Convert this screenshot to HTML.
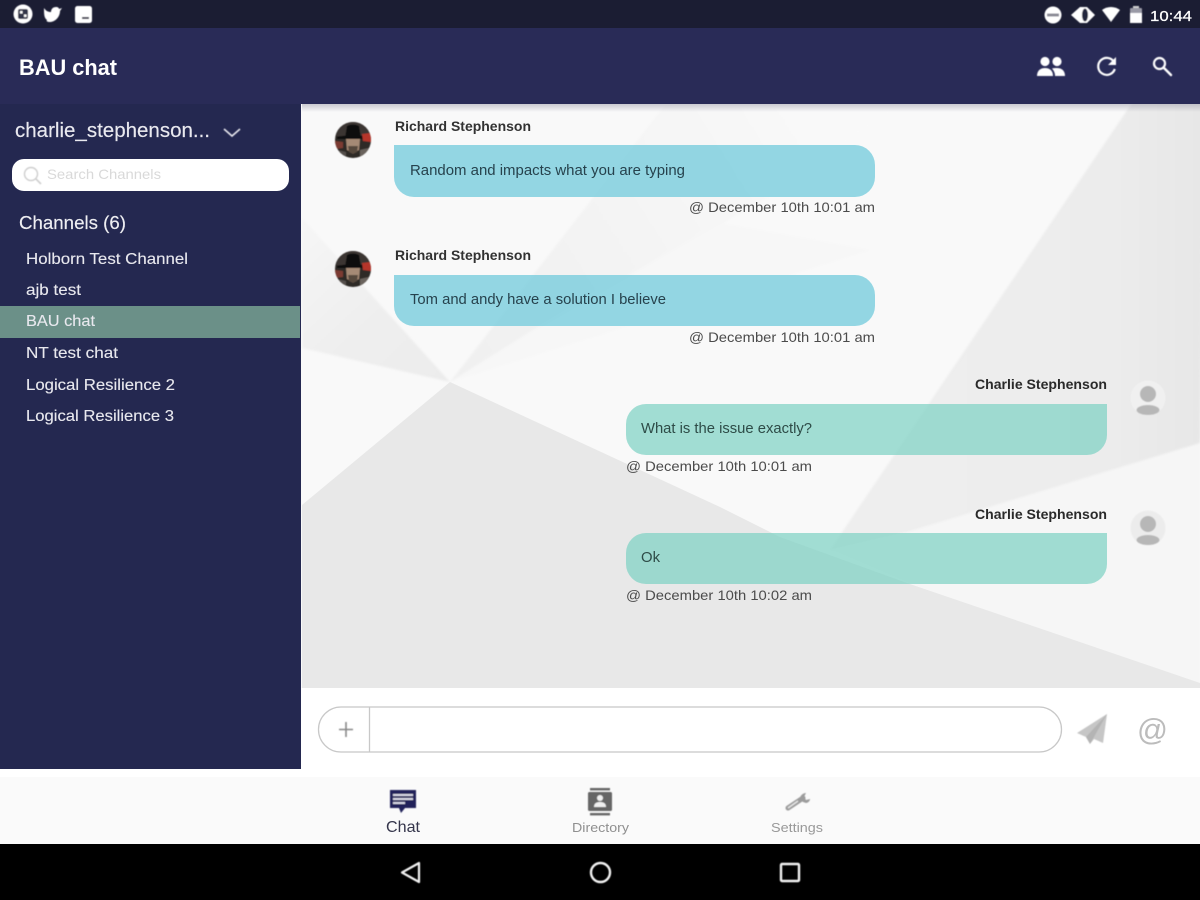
<!DOCTYPE html>
<html lang="en">
<head>
<meta charset="utf-8">
<title>BAU chat</title>
<style>
html,body{margin:0;padding:0;width:1200px;height:900px;overflow:hidden;background:#fff}
svg{display:block;position:absolute;left:0;top:0}
text{font-family:"Liberation Sans",sans-serif}
</style>
</head>
<body>
<svg width="1200" height="900" viewBox="0 0 1200 900" xmlns="http://www.w3.org/2000/svg">
<defs>
<filter id="b" x="-5%" y="-5%" width="110%" height="110%"><feGaussianBlur stdDeviation="0.5"/></filter>
<filter id="t" x="-5%" y="-5%" width="110%" height="110%"><feGaussianBlur stdDeviation="0.35"/></filter>
<filter id="soft" x="-5%" y="-5%" width="110%" height="110%"><feGaussianBlur stdDeviation="1"/></filter>
<linearGradient id="sh" x1="0" y1="0" x2="0" y2="1"><stop offset="0" stop-color="#9a9aa8" stop-opacity=".5"/><stop offset="1" stop-color="#9a9aa8" stop-opacity="0"/></linearGradient>
<linearGradient id="wedgeL" gradientUnits="userSpaceOnUse" x1="300" y1="220" x2="450" y2="380"><stop offset="0" stop-color="#f6f6f6"/><stop offset=".6" stop-color="#eeeeee"/><stop offset="1" stop-color="#ececec"/></linearGradient>
<linearGradient id="wedgeU" gradientUnits="userSpaceOnUse" x1="450" y1="382" x2="820" y2="150"><stop offset="0" stop-color="#f0f0f0"/><stop offset=".55" stop-color="#f4f4f4"/><stop offset="1" stop-color="#f9f9f9"/></linearGradient>
<linearGradient id="wedgeR" gradientUnits="userSpaceOnUse" x1="900" y1="300" x2="1200" y2="300"><stop offset="0" stop-color="#eeeeee"/><stop offset=".7" stop-color="#ececec"/><stop offset="1" stop-color="#e7e7e7"/></linearGradient>
<clipPath id="av1"><circle cx="353" cy="140" r="18"/></clipPath>
<clipPath id="av2"><circle cx="353" cy="269" r="18"/></clipPath>
</defs>

<!-- chat background -->
<rect x="300" y="104" width="900" height="585" fill="#f9f9f9"/>
<g filter="url(#soft)">
<polygon points="450,382 665,105 900,105 780,190" fill="url(#wedgeU)"/>
<polygon points="450,382 533,330 720,223 870,250" fill="#f7f7f7"/>
<polygon points="302,218 450,382 302,348" fill="url(#wedgeL)"/>
<polygon points="830,550 907,532 1200,443 1200,690 907,583" fill="#f6f6f6"/>
<polygon points="1134,100 830,550 907,532 1200,443 1204,100" fill="url(#wedgeR)"/>
</g>
<polygon points="450,382 720,507 780,537 907,583 1200,683 1200,688 302,688 302,505" fill="#e8e8e8"/>
<rect x="302" y="104" width="898" height="8" fill="url(#sh)"/>

<!-- status bar + header -->
<rect x="0" y="0" width="1200" height="28" fill="#1b1d33"/>
<rect x="0" y="28" width="1200" height="76" fill="#292b57"/>

<!-- sidebar -->
<rect x="0" y="104" width="301" height="665" fill="#242850"/>
<rect x="0" y="306" width="300" height="32" fill="#6b9088"/>

<!-- input + tabs + nav -->
<rect x="301" y="688" width="899" height="88" fill="#fff"/>
<rect x="0" y="769" width="301" height="8" fill="#fff"/>
<rect x="0" y="777" width="1200" height="67" fill="#fafafa"/>
<rect x="0" y="844" width="1200" height="56" fill="#000"/>

<!-- bubbles -->
<path d="M394 145H855a20 20 0 0 1 20 20V177a20 20 0 0 1-20 20H414a20 20 0 0 1-20-20Z" fill="#68c7da" fill-opacity=".7"/>
<path d="M394 275H855a20 20 0 0 1 20 20V306a20 20 0 0 1-20 20H414a20 20 0 0 1-20-20Z" fill="#68c7da" fill-opacity=".7"/>
<path d="M1107 404V435a20 20 0 0 1-20 20H646a20 20 0 0 1-20-20V424a20 20 0 0 1 20-20Z" fill="#7cd1c3" fill-opacity=".7"/>
<path d="M1107 533V564a20 20 0 0 1-20 20H646a20 20 0 0 1-20-20V553a20 20 0 0 1 20-20Z" fill="#7cd1c3" fill-opacity=".7"/>

<!-- avatars -->
<g filter="url(#b)">
<g clip-path="url(#av1)">
<rect x="335" y="122" width="36" height="36" fill="#2f2a28"/>
<path d="M335 122h36v14h-36Z" fill="#3a3431"/>
<path d="M337 137c4-2 28-2 32 0v2h-32Z" fill="#0c0c0e"/>
<path d="M345 138l2-12c4-2 8-2 12 0l2 12Z" fill="#0c0c0e"/>
<path d="M346 139h14l-1 11-6 3-6-3Z" fill="#a58a74"/>
<path d="M348 146h10l-1 6-4 2-4-2Z" fill="#56483e"/>
<path d="M362 134l9-1v9l-8-1Z" fill="#b5342a"/>
<path d="M335 141l8 1v6l-8 1Z" fill="#7c3a30"/>
<path d="M337 150l9 2v6h-9Z" fill="#55504c"/>
<path d="M360 150l9-2v10h-9Z" fill="#6a635d"/>
</g>
<g clip-path="url(#av2)">
<rect x="335" y="251" width="36" height="36" fill="#2f2a28"/>
<path d="M335 251h36v14h-36Z" fill="#3a3431"/>
<path d="M337 266c4-2 28-2 32 0v2h-32Z" fill="#0c0c0e"/>
<path d="M345 267l2-12c4-2 8-2 12 0l2 12Z" fill="#0c0c0e"/>
<path d="M346 268h14l-1 11-6 3-6-3Z" fill="#a58a74"/>
<path d="M348 275h10l-1 6-4 2-4-2Z" fill="#56483e"/>
<path d="M362 263l9-1v9l-8-1Z" fill="#b5342a"/>
<path d="M335 270l8 1v6l-8 1Z" fill="#7c3a30"/>
<path d="M337 279l9 2v6h-9Z" fill="#55504c"/>
<path d="M360 279l9-2v10h-9Z" fill="#6a635d"/>
</g>
<circle cx="1148" cy="398" r="17.5" fill="#f0f0f0"/>
<circle cx="1148" cy="394" r="8" fill="#b7b7b7"/>
<ellipse cx="1148" cy="410" rx="11.5" ry="5" fill="#b7b7b7"/>
<circle cx="1148" cy="528" r="17.5" fill="#ececec"/>
<circle cx="1148" cy="524" r="8" fill="#b7b7b7"/>
<ellipse cx="1148" cy="540" rx="11.5" ry="5" fill="#b7b7b7"/>
</g>

<!-- input -->
<rect x="318.5" y="707" width="743" height="45" rx="22.5" fill="#fff" stroke="#c8c8c8" stroke-width="1.3"/>
<path d="M369.5 707V752" stroke="#c8c8c8" stroke-width="1.3"/>

<g filter="url(#b)">
<!-- status bar icons -->
<circle cx="23" cy="14" r="9.5" fill="#fff"/>
<rect x="18" y="9" width="10" height="10" rx="2" fill="#33354a"/>
<rect x="20" y="11" width="2.5" height="2.5" fill="#fff"/><rect x="24" y="14.5" width="2.5" height="2.5" fill="#fff"/>
<path d="M44 8c2 3 4 4 7 4 0-3 2-5 5-5 2 0 3 1 3 2l3-1-2 3c0 6-5 11-10 11-3 0-4-1-3-2-3-2-3-6-3-12Z" fill="#fff"/>
<rect x="75" y="6" width="17" height="17" rx="2.5" fill="#fff"/>
<path d="M82 17h7v2h-7Z" fill="#33354a"/>

<circle cx="1053" cy="15" r="8.5" fill="#fff"/>
<rect x="1047" y="13.5" width="12" height="3" fill="#8a8a96"/>
<path d="M1071 15L1080 7H1087L1095 15L1087 23H1080Z" fill="#fff"/>
<ellipse cx="1085" cy="15" rx="3" ry="6.5" fill="#24263c"/>
<path d="M1102 10c5-4 13-4 18 0l-9 12Z" fill="#fff"/>
<rect x="1133" y="6" width="6" height="3" fill="#d0d0d0"/>
<rect x="1130" y="8" width="12" height="15" rx="1" fill="#9a9aa6"/>
<rect x="1130" y="13" width="12" height="10" fill="#fff"/>

<!-- header icons -->
<circle cx="1045" cy="61.5" r="4.6" fill="#fff"/>
<circle cx="1057" cy="61.5" r="4.6" fill="#fff"/>
<path d="M1037 76c0-6 4-8 8-8s8 2 8 8Z" fill="#fff"/>
<path d="M1052 68.5c1-.5 3-.5 5-.5 4 0 8 2 8 8h-10c0-3-1-5-3-7.5Z" fill="#fff"/>
<path d="M1114 62a8.5 8.5 0 1 0 .8 7" fill="none" stroke="#fff" stroke-width="2.2"/>
<path d="M1116 57v8h-8Z" fill="#fff"/>
<circle cx="1159.5" cy="63.5" r="5.5" fill="none" stroke="#fff" stroke-width="2.2"/>
<path d="M1164 68l7 7" stroke="#fff" stroke-width="2.4" stroke-linecap="round"/>

<!-- chevron -->
<path d="M224 129l8 7 8-7" fill="none" stroke="#e8e8ee" stroke-width="1.6"/>
</g>

<!-- search -->
<rect x="12" y="159" width="277" height="32" rx="12" fill="#fff"/>
<g filter="url(#b)">
<circle cx="31" cy="174" r="6.5" fill="none" stroke="#cfcfcf" stroke-width="1.4"/>
<path d="M36 179l5 5" stroke="#cfcfcf" stroke-width="1.6"/>

<!-- bottom tab icons -->
<path d="M390 790H416V808H405L401 813L399 808H390Z" fill="#20245a"/>
<rect x="393" y="794" width="20" height="2" fill="#d8d8e4"/>
<rect x="393" y="798" width="20" height="2" fill="#d8d8e4"/>
<rect x="393" y="802" width="12" height="2" fill="#d8d8e4"/>
<rect x="590" y="788" width="20" height="2.4" fill="#666"/>
<rect x="590" y="813" width="20" height="2.4" fill="#666"/>
<rect x="588" y="792" width="24" height="19" rx="1.5" fill="#666"/>
<circle cx="600" cy="798" r="3" fill="#f0f0f0"/>
<path d="M594 807c0-4 3-5 6-5s6 1 6 5Z" fill="#f0f0f0"/>
<path d="M788 808L803 798" stroke="#9c9c9c" stroke-width="5" stroke-linecap="round"/>
<path d="M806 793a6 6 0 0 0-6 6l3 3 3 1c2 0 4-2 4-4l-4 1-2-3Z" fill="#9c9c9c"/>
<path d="M788 808L798 801" stroke="#e6e6e6" stroke-width="1.4"/>

<!-- send -->
<path d="M1107 714L1077 733L1086 737L1090 744L1094 739L1103 743Z" fill="#c6c6c6"/>
<path d="M1107 714L1086 737L1090 744Z" fill="#b4b4b4"/>

<!-- plus -->
<path d="M346 722V737M339 729.5H353" stroke="#888" stroke-width="1.6"/>

<!-- nav -->
<path d="M419 863V882L402 872.5Z" fill="none" stroke="#f2f2f2" stroke-width="2.2" stroke-linejoin="round"/>
<circle cx="600.5" cy="872.5" r="9.5" fill="none" stroke="#f2f2f2" stroke-width="2.4"/>
<rect x="781" y="864" width="18" height="17" rx="1" fill="none" stroke="#f2f2f2" stroke-width="2.4"/>
</g>

<!-- text -->
<g filter="url(#t)">
<text x="1150" y="21" font-size="15" fill="#fff" stroke="#fff" stroke-width=".25" textLength="42" lengthAdjust="spacingAndGlyphs">10:44</text>
<text x="19" y="75" font-size="22" font-weight="bold" fill="#fff" textLength="98" lengthAdjust="spacingAndGlyphs">BAU chat</text>
<text x="15" y="137" font-size="20" fill="#e9e9ef" stroke="#e9e9ef" stroke-width=".15" textLength="195" lengthAdjust="spacingAndGlyphs">charlie_stephenson...</text>
<text x="47" y="179" font-size="14" fill="#d9d9d9" textLength="114" lengthAdjust="spacingAndGlyphs">Search Channels</text>
<text x="19" y="229" font-size="18" fill="#eeeef2" stroke="#eeeef2" stroke-width=".15" textLength="107" lengthAdjust="spacingAndGlyphs">Channels (6)</text>
<g fill="#e8e8ee" stroke="#e8e8ee" stroke-width=".12" font-size="16">
<text x="26" y="264" textLength="162" lengthAdjust="spacingAndGlyphs">Holborn Test Channel</text>
<text x="26" y="295" textLength="55" lengthAdjust="spacingAndGlyphs">ajb test</text>
<text x="26" y="326" textLength="69" lengthAdjust="spacingAndGlyphs">BAU chat</text>
<text x="26" y="358" textLength="92" lengthAdjust="spacingAndGlyphs">NT test chat</text>
<text x="26" y="390" textLength="149" lengthAdjust="spacingAndGlyphs">Logical Resilience 2</text>
<text x="26" y="421" textLength="148" lengthAdjust="spacingAndGlyphs">Logical Resilience 3</text>
</g>

<text x="395" y="131" font-size="14" font-weight="bold" fill="#333" textLength="136" lengthAdjust="spacingAndGlyphs">Richard Stephenson</text>
<text x="410" y="175" font-size="14.5" fill="#27434e" textLength="275" lengthAdjust="spacingAndGlyphs">Random and impacts what you are typing</text>
<text x="689" y="212" font-size="14" fill="#4c4c4c" textLength="186" lengthAdjust="spacingAndGlyphs">@ December 10th 10:01 am</text>

<text x="395" y="260" font-size="14" font-weight="bold" fill="#333" textLength="136" lengthAdjust="spacingAndGlyphs">Richard Stephenson</text>
<text x="410" y="304" font-size="14.5" fill="#27434e" textLength="256" lengthAdjust="spacingAndGlyphs">Tom and andy have a solution I believe</text>
<text x="689" y="342" font-size="14" fill="#4c4c4c" textLength="186" lengthAdjust="spacingAndGlyphs">@ December 10th 10:01 am</text>

<text x="975" y="389" font-size="14" font-weight="bold" fill="#2a2a2a" textLength="132" lengthAdjust="spacingAndGlyphs">Charlie Stephenson</text>
<text x="641" y="433" font-size="14.5" fill="#2d4c47" textLength="171" lengthAdjust="spacingAndGlyphs">What is the issue exactly?</text>
<text x="626" y="471" font-size="14" fill="#4c4c4c" textLength="186" lengthAdjust="spacingAndGlyphs">@ December 10th 10:01 am</text>

<text x="975" y="519" font-size="14" font-weight="bold" fill="#2a2a2a" textLength="132" lengthAdjust="spacingAndGlyphs">Charlie Stephenson</text>
<text x="641" y="562" font-size="14.5" fill="#2d4c47" textLength="19" lengthAdjust="spacingAndGlyphs">Ok</text>
<text x="626" y="600" font-size="14" fill="#4c4c4c" textLength="186" lengthAdjust="spacingAndGlyphs">@ December 10th 10:02 am</text>

<text x="1137" y="740" font-size="31" fill="#bcbcbc" textLength="31" lengthAdjust="spacingAndGlyphs">@</text>

<text x="386" y="832" font-size="16" fill="#34364c" textLength="34" lengthAdjust="spacingAndGlyphs">Chat</text>
<text x="572" y="832" font-size="13" fill="#8f8f8f" textLength="57" lengthAdjust="spacingAndGlyphs">Directory</text>
<text x="771" y="832" font-size="13" fill="#999" textLength="52" lengthAdjust="spacingAndGlyphs">Settings</text>
</g>
</svg>
</body>
</html>
